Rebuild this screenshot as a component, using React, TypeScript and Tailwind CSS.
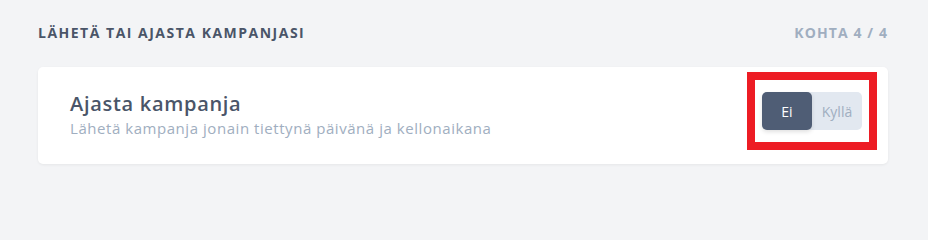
export default function App() {
  return (
    <div
      className="min-h-screen w-full bg-[#f3f4f6] pl-[38px] pr-[40px] pt-[23px]"
      style={{ fontFamily: '"Open Sans", "Liberation Sans", sans-serif' }}
    >
      <div className="flex items-center justify-between">
        <h2 className="text-[14px] font-bold uppercase leading-5 tracking-[1.5px] text-[#4a5568]">
          Lähetä tai ajasta kampanjasi
        </h2>
        <span className="text-[14px] font-bold uppercase leading-5 tracking-[1.1px] text-[#a0aec0]">
          Kohta 4 / 4
        </span>
      </div>

      <div className="mt-[24px] flex items-start justify-between rounded-[5px] bg-white pb-[14px] pl-8 pr-[11px] pt-[5px] shadow-[0_1px_3px_rgba(0,0,0,0.06)]">
        <div className="pt-[18px]">
          <h3 className="text-[20px] font-semibold leading-7 tracking-[0.7px] text-[#4a5568]">
            Ajasta kampanja
          </h3>
          <p className="text-[15px] leading-5 tracking-[0.55px] text-[#a0aec0]">
            Lähetä kampanja jonain tiettynä päivänä ja kellonaikana
          </p>
        </div>

        {/* kehystetty valinta */}
        <div className="flex h-[78px] w-[130px] items-center justify-center border-8 border-[#ed1c24]">
          <div className="flex h-[38px] w-[100px] rounded-[5px] bg-[#e2e8f0] text-[14px]">
            <button className="flex w-[50px] items-center justify-center rounded-[5px] bg-[#4f5d75] text-white shadow-[0_2px_4px_rgba(0,0,0,0.12)]">
              Ei
            </button>
            <button className="flex w-[50px] items-center justify-center text-[#a0aec0]">
              Kyllä
            </button>
          </div>
        </div>
      </div>
    </div>
  );
}
